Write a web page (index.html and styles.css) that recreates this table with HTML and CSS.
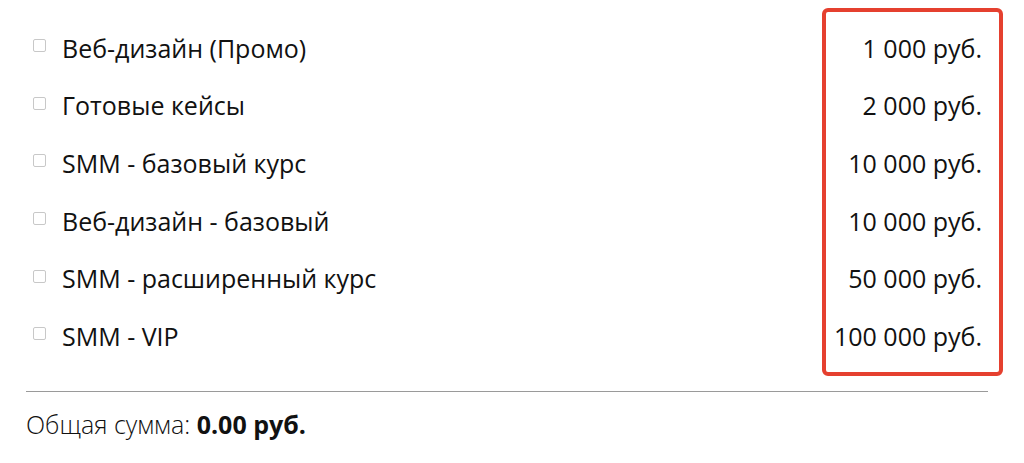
FILE: index.html
```html
<!DOCTYPE html>
<html lang="ru">
<head>
<meta charset="utf-8">
<link rel="stylesheet" href="styles.css">
</head>
<body>
<div class="calc">
  <div class="items">
    <label class="row"><input type="checkbox" class="cb"><span>Веб-дизайн (Промо)</span></label>
    <label class="row"><input type="checkbox" class="cb"><span>Готовые кейсы</span></label>
    <label class="row"><input type="checkbox" class="cb"><span>SMM - базовый курс</span></label>
    <label class="row"><input type="checkbox" class="cb"><span>Веб-дизайн - базовый</span></label>
    <label class="row"><input type="checkbox" class="cb"><span>SMM - расширенный курс</span></label>
    <label class="row"><input type="checkbox" class="cb"><span>SMM - VIP</span></label>
  </div>
  <div class="prices">
    <div class="price">1 000 руб.</div>
    <div class="price">2 000 руб.</div>
    <div class="price">10 000 руб.</div>
    <div class="price">10 000 руб.</div>
    <div class="price">50 000 руб.</div>
    <div class="price">100 000 руб.</div>
  </div>
</div>
<hr class="divider">
<div class="total">Общая сумма: <b>0.00 руб.</b></div>
</body>
</html>
```
FILE: styles.css
```css
html, body {
  margin: 0;
  padding: 0;
  background: #fff;
}
body {
  font-family: "Open Sans", "Liberation Sans", sans-serif;
  color: #111;
  font-size: 25px;
}
.calc {
  display: grid;
  grid-template-columns: 1fr 181px;
  width: 977px;
  margin: 8px 0 0 26px;
}
.items {
  padding: 11px 0;
}
.row {
  display: flex;
  align-items: center;
  height: 57.6px;
}
.cb {
  appearance: none;
  -webkit-appearance: none;
  width: 13px;
  height: 13px;
  margin: 0 16px 0 7px;
  border: 1px solid #c8c8c8;
  border-radius: 2px;
  background: #fff;
  box-sizing: border-box;
  position: relative;
  top: -2px;
}
.prices {
  border: 4px solid #e5402f;
  border-radius: 6px;
  padding: 7px 17px 7px 0;
}
.price {
  height: 57.6px;
  display: flex;
  align-items: center;
  justify-content: flex-end;
}
.divider {
  width: 962px;
  margin: 15px 0 0 26px;
  border: 0;
  border-top: 1px solid #9a9a9a;
  height: 0;
}
.total {
  margin: 15px 0 0 26px;
  font-weight: 300;
}
.total b {
  font-weight: 700;
}
```
